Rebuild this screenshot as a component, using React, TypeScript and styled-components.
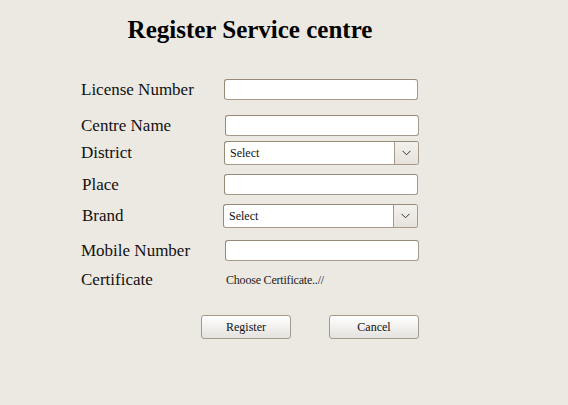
import React from 'react';
import styled, { createGlobalStyle } from 'styled-components';

const GlobalStyle = createGlobalStyle`
  html, body {
    margin: 0;
    padding: 0;
    background: #ece9e2;
    font-family: "Liberation Serif", "Times New Roman", serif;
  }
`;

export default function App() {
  return (
    <>
      <GlobalStyle />
      <Page>
        <Form>
          <Title>Register Service centre</Title>
          <Row $top={35}>
            <Label>License Number</Label>
            <TextInput type="text" />
          </Row>
          <Row $top={15}>
            <Label>Centre Name</Label>
            <TextInput type="text" $shift={1} />
          </Row>
          <Row $top={5}>
            <Label>District</Label>
            <SelectBox>
              <Select defaultValue="">
                <option value="">Select</option>
              </Select>
              <Arrow>
                <Chevron />
              </Arrow>
            </SelectBox>
          </Row>
          <Row $top={9}>
            <Label $shift={1}>Place</Label>
            <TextInput type="text" />
          </Row>
          <Row $top={9}>
            <Label $shift={1}>Brand</Label>
            <SelectBox $shift={-1}>
              <Select defaultValue="">
                <option value="">Select</option>
              </Select>
              <Arrow>
                <Chevron />
              </Arrow>
            </SelectBox>
          </Row>
          <Row $top={12}>
            <Label>Mobile Number</Label>
            <TextInput type="text" $shift={1} />
          </Row>
          <Row $top={9}>
            <Label>Certificate</Label>
            <FileText>Choose Certificate..//</FileText>
          </Row>
          <Buttons>
            <Button type="button">Register</Button>
            <Button type="button">Cancel</Button>
          </Buttons>
        </Form>
      </Page>
    </>
  );
}

function Chevron() {
  return (
    <svg width="9" height="6" viewBox="0 0 9 6">
      <path d="M0.5 0.8 L4.5 4.8 L8.5 0.8" fill="none" stroke="#333" strokeWidth="1" />
    </svg>
  );
}

const Page = styled.div`
  width: 568px;
  height: 405px;
  padding: 15px 0 0 81px;
  box-sizing: border-box;
`;

const Form = styled.div`
  width: 338px;
  display: flex;
  flex-direction: column;
`;

const Title = styled.h1`
  margin: 0;
  font-size: 25px;
  line-height: 29px;
  font-weight: 700;
  color: #000;
  text-align: center;
`;

const Row = styled.div<{ $top: number }>`
  display: flex;
  align-items: center;
  margin-top: ${(p) => p.$top}px;
`;

const Label = styled.label<{ $shift?: number }>`
  width: 143px;
  padding-left: ${(p) => p.$shift || 0}px;
  box-sizing: border-box;
  font-size: 17px;
  color: #111;
`;

const TextInput = styled.input<{ $shift?: number }>`
  width: 194px;
  height: 21px;
  margin: 0 0 0 ${(p) => p.$shift || 0}px;
  padding: 0 4px;
  box-sizing: border-box;
  background: #fff;
  border: 1px solid #a69a8a;
  border-top-color: #978a79;
  border-left-color: #978a79;
  border-radius: 3px;
  font-family: inherit;
  font-size: 12px;
  outline: none;
`;

const SelectBox = styled.div<{ $shift?: number }>`
  position: relative;
  width: 195px;
  height: 24px;
  margin-left: ${(p) => p.$shift || 0}px;
  box-sizing: border-box;
  border: 1px solid #a69a8a;
  border-top-color: #978a79;
  border-left-color: #978a79;
  border-radius: 3px;
  background: #fff;
  display: flex;
`;

const Select = styled.select`
  flex: 1;
  height: 100%;
  border: none;
  margin: 0;
  padding: 0 0 0 5px;
  background: transparent;
  appearance: none;
  font-family: inherit;
  font-size: 12px;
  color: #111;
  outline: none;
`;

const Arrow = styled.div`
  width: 23px;
  border-left: 1px solid #a69a8a;
  background: linear-gradient(#f4f2ee, #e6e2db);
  border-radius: 0 2px 2px 0;
  display: flex;
  align-items: center;
  justify-content: center;
  pointer-events: none;
`;

const FileText = styled.span`
  padding-left: 2px;
  font-size: 12px;
  color: #222;
  letter-spacing: -0.2px;
`;

const Buttons = styled.div`
  display: flex;
  gap: 38px;
  margin: 25px 0 0 120px;
`;

const Button = styled.button`
  width: 90px;
  height: 24px;
  padding: 0;
  border: 1px solid #a69a8a;
  border-radius: 3px;
  background: linear-gradient(#ffffff, #e4e2de);
  font-family: "Liberation Serif", "Times New Roman", serif;
  font-size: 12px;
  color: #111;
`;
